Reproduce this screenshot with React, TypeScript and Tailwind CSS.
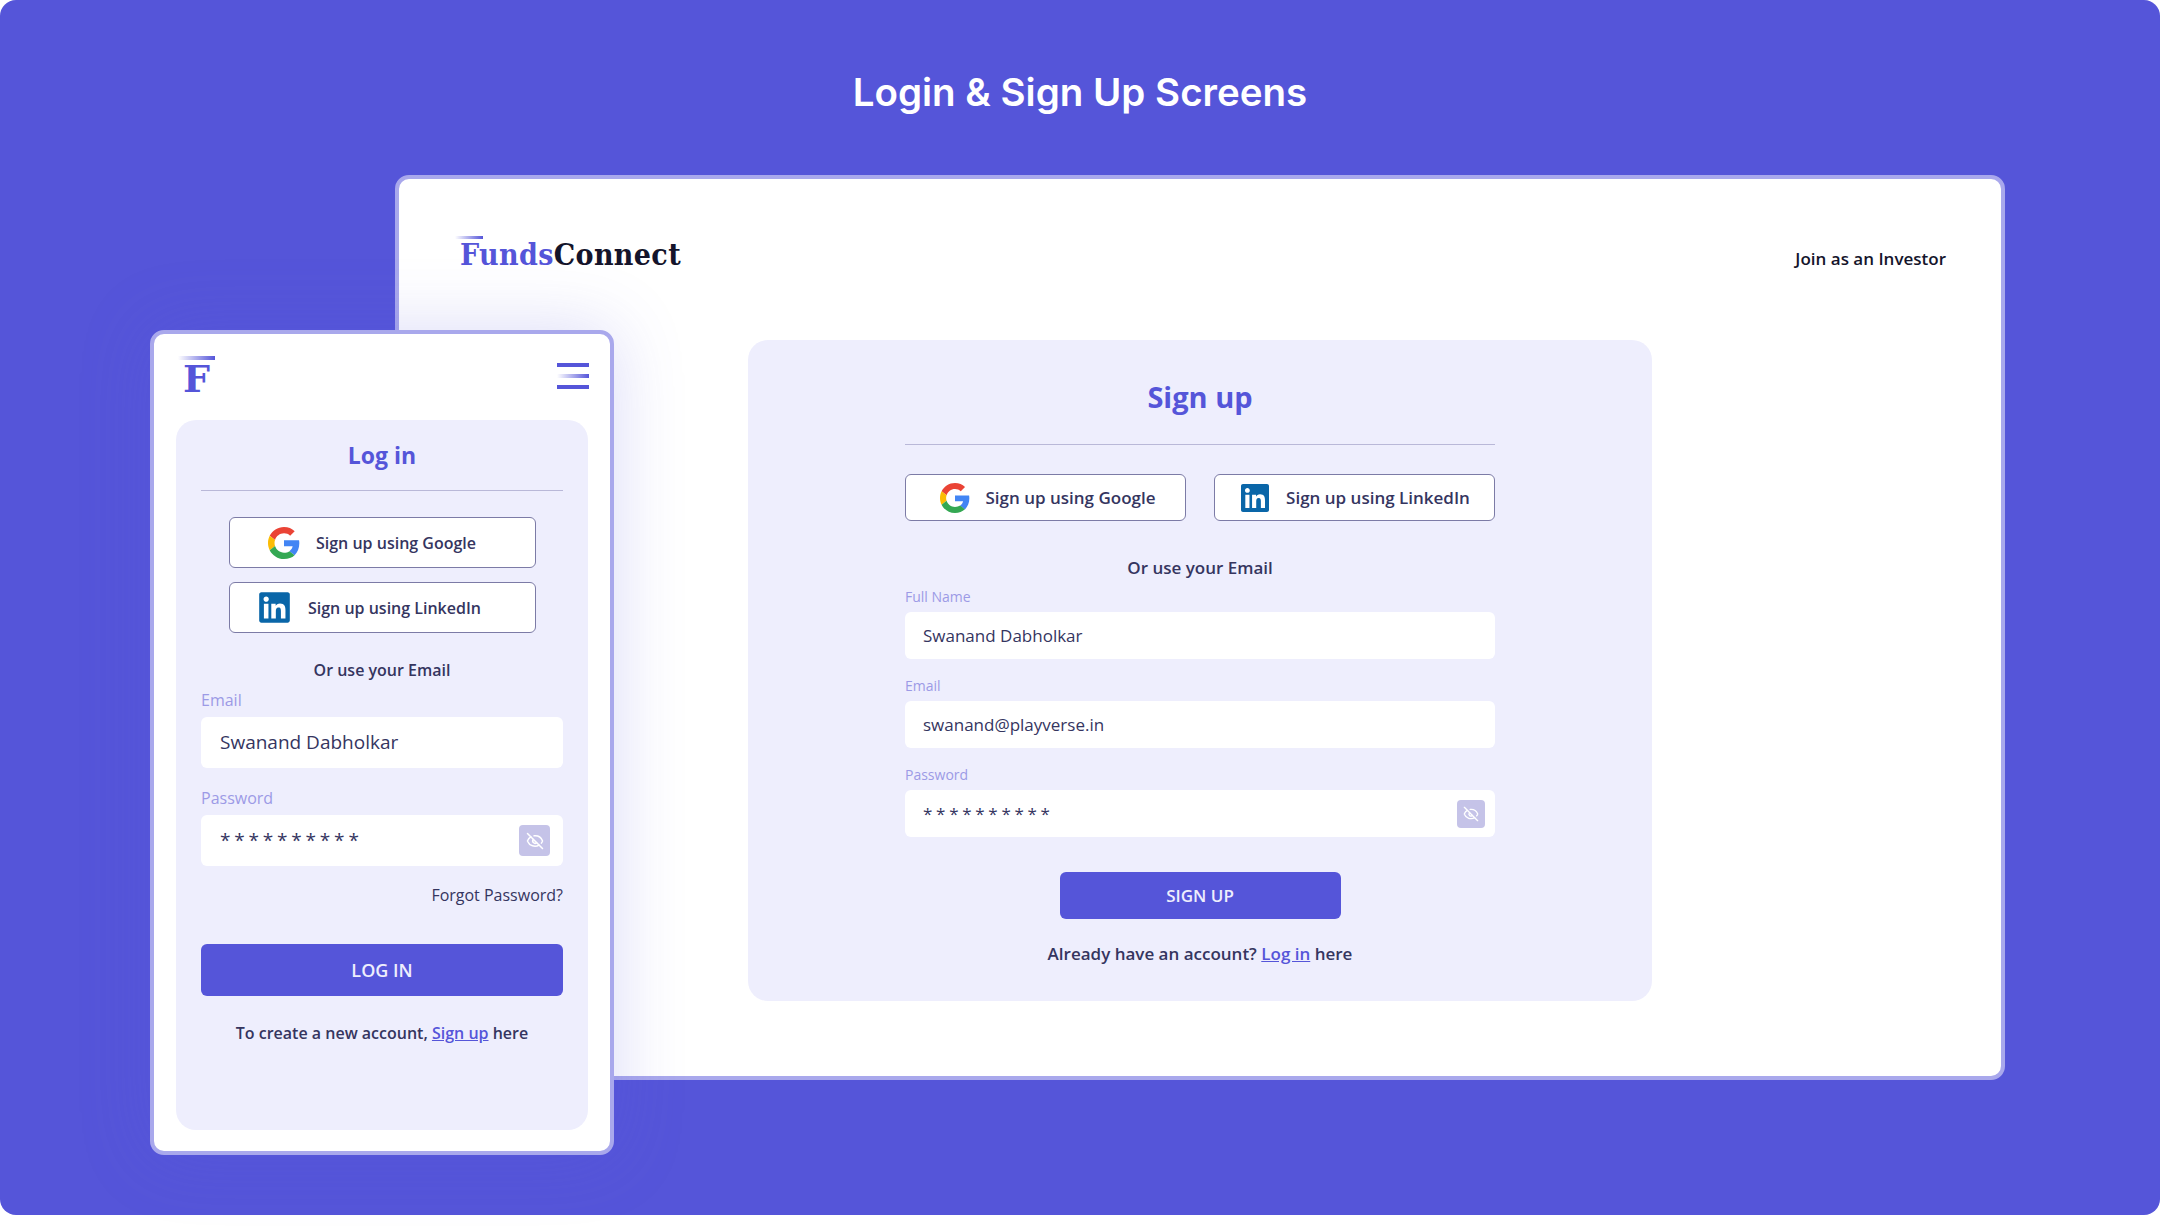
import { EyeOff } from 'lucide-react';
import { FaLinkedin } from 'react-icons/fa';

function GoogleIcon({ className }: { className: string }) {
  return (
    <svg viewBox="0 0 48 48" className={className}>
      <path fill="#EA4335" d="M24 9.5c3.54 0 6.71 1.22 9.21 3.6l6.85-6.85C35.9 2.38 30.47 0 24 0 14.62 0 6.51 5.38 2.56 13.22l7.98 6.19C12.43 13.72 17.74 9.5 24 9.5z" />
      <path fill="#4285F4" d="M46.98 24.55c0-1.57-.15-3.09-.38-4.55H24v9.02h12.94c-.58 2.96-2.26 5.48-4.78 7.18l7.73 6c4.51-4.18 7.09-10.36 7.09-17.65z" />
      <path fill="#FBBC05" d="M10.53 28.59c-.48-1.45-.76-2.99-.76-4.59s.27-3.14.76-4.59l-7.98-6.19C.92 16.46 0 20.12 0 24c0 3.88.92 7.54 2.56 10.78l7.97-6.19z" />
      <path fill="#34A853" d="M24 48c6.48 0 11.93-2.13 15.89-5.81l-7.73-6c-2.15 1.45-4.92 2.3-8.16 2.3-6.26 0-11.57-4.22-13.47-9.91l-7.98 6.19C6.51 42.62 14.62 48 24 48z" />
    </svg>
  );
}

function DesktopField({ label, value, secret }: { label: string; value: string; secret?: boolean }) {
  return (
    <div className="mt-[18px] first:mt-[8px]">
      <div className="text-[14px] leading-[18px] text-[#9c9ae6]">{label}</div>
      <div className="mt-[6px] flex h-[47px] items-center justify-between rounded-md bg-white pl-[18px] pr-[10px] text-[17px] font-medium text-[#35355f]">
        <span className={secret ? 'tracking-[3.7px]' : ''}>{value}</span>
        {secret && (
          <span className="flex h-[28px] w-[28px] items-center justify-center rounded bg-[#c5c3e8]">
            <EyeOff className="h-4 w-4 text-white" />
          </span>
        )}
      </div>
    </div>
  );
}

function MobileField({ label, value, secret }: { label: string; value: string; secret?: boolean }) {
  return (
    <div className="mt-[20px] first:mt-[8px]">
      <div className="text-[16px] leading-[20px] text-[#9c9ae6]">{label}</div>
      <div className="mt-[7px] flex h-[51px] items-center justify-between rounded-md bg-white pl-[19px] pr-[13px] text-[19px] font-medium text-[#35355f]">
        <span className={secret ? 'tracking-[3.8px]' : ''}>{value}</span>
        {secret && (
          <span className="flex h-[31px] w-[31px] items-center justify-center rounded bg-[#c5c3e8]">
            <EyeOff className="h-[18px] w-[18px] text-white" />
          </span>
        )}
      </div>
    </div>
  );
}

function DesktopWindow() {
  return (
    <div className="absolute left-[395px] top-[175px] h-[905px] w-[1610px] rounded-[14px] border-4 border-[#a9a8ec] bg-white">
      {/* Header */}
      <div className="flex h-[161px] items-start justify-between pl-[61px] pr-[55px] pt-[58px]">
        <div className="relative text-[30px] font-bold leading-[36px] tracking-[0.35px] [font-family:'DejaVu_Serif_Condensed','DejaVu_Serif',serif]">
          <span className="absolute left-[-5px] top-[-1px] h-[3px] w-[28px] bg-gradient-to-r from-transparent to-[#5555d9]" />
          <span className="text-[#5555d9]">Funds</span>
          <span className="text-[#14142b]">Connect</span>
        </div>
        <div className="pt-[9px] text-[17px] font-semibold text-[#14142b]">Join as an Investor</div>
      </div>

      {/* Sign up card */}
      <div className="mx-auto h-[661px] w-[904px] rounded-[20px] bg-[#eeeefd] pt-[37px]">
        <div className="mx-auto w-[590px]">
          <h2 className="text-center text-[29px] font-bold leading-[40px] text-[#5555d9]">Sign up</h2>
          <div className="mt-[27px] h-px bg-[#b9b8d8]" />
          <div className="mt-[29px] flex justify-between">
            <button className="flex h-[47px] w-[281px] items-center justify-center gap-[15px] rounded-md border border-[#7c7ba6] bg-white pl-[5px] text-[17px] font-semibold text-[#35355f]">
              <GoogleIcon className="h-[30px] w-[30px]" />
              Sign up using Google
            </button>
            <button className="flex h-[47px] w-[281px] items-center justify-center gap-[15px] rounded-md border border-[#7c7ba6] bg-white text-[17px] font-semibold text-[#35355f]">
              <FaLinkedin className="h-[32px] w-[32px] text-[#0a66a8]" />
              Sign up using LinkedIn
            </button>
          </div>
          <div className="mt-[35px] text-center text-[17px] font-semibold leading-[24px] text-[#35355f]">Or use your Email</div>
          <div>
            <DesktopField label="Full Name" value="Swanand Dabholkar" />
            <DesktopField label="Email" value="swanand@playverse.in" />
            <DesktopField label="Password" value="**********" secret />
          </div>
          <button className="mx-auto mt-[35px] block h-[47px] w-[281px] rounded-md bg-[#5555d9] text-[17px] font-semibold text-[#eeeefd]">SIGN UP</button>
          <div className="mt-[23px] text-center text-[17px] font-semibold leading-[24px] text-[#35355f]">
            Already have an account? <span className="text-[#5555d9] underline">Log in</span> here
          </div>
        </div>
      </div>
    </div>
  );
}

function MobileWindow() {
  return (
    <div className="absolute left-[150px] top-[330px] h-[825px] w-[464px] rounded-[14px] border-4 border-[#a9a8ec] bg-white shadow-[0_0_70px_rgba(85,85,217,0.22)]">
      {/* Header */}
      <div className="flex h-[86px] items-start justify-between pl-[24px] pr-[21px] pt-[22px]">
        <div className="relative h-[40px] w-[40px] text-[38px] font-bold leading-[42px] text-[#5555d9] [font-family:'DejaVu_Serif',serif]">
          <span className="absolute left-0 top-0 h-[4px] w-[37px] bg-gradient-to-r from-transparent to-[#5555d9]" />
          <span className="absolute left-[5px] top-[2px]">F</span>
        </div>
        <div className="flex w-[32px] flex-col gap-[7px] pt-[7px]">
          <span className="h-[4px] bg-[#5555d9]" />
          <span className="h-[4px] bg-gradient-to-r from-transparent to-[#5555d9]" />
          <span className="h-[4px] bg-[#5555d9]" />
        </div>
      </div>

      {/* Log in card */}
      <div className="mx-auto h-[710px] w-[412px] rounded-[20px] bg-[#eeeefd] px-[25px] pt-[18px]">
        <h2 className="text-center text-[23px] font-bold leading-[34px] text-[#5555d9]">Log in</h2>
        <div className="mt-[18px] h-px bg-[#b9b8d8]" />
        <div className="mt-[26px] flex flex-col items-center gap-[14px]">
          <button className="flex h-[51px] w-[307px] items-center justify-center gap-[16px] rounded-md border border-[#7c7ba6] bg-white pr-[20px] text-[16px] font-semibold text-[#35355f]">
            <GoogleIcon className="h-[32px] w-[32px]" />
            Sign up using Google
          </button>
          <button className="flex h-[51px] w-[307px] items-center justify-center gap-[16px] rounded-md border border-[#7c7ba6] bg-white pr-[26px] text-[16px] font-semibold text-[#35355f]">
            <FaLinkedin className="h-[35px] w-[35px] text-[#0a66a8]" />
            Sign up using LinkedIn
          </button>
        </div>
        <div className="mt-[25px] text-center text-[16px] font-semibold leading-[24px] text-[#35355f]">Or use your Email</div>
        <div>
          <MobileField label="Email" value="Swanand Dabholkar" />
          <MobileField label="Password" value="**********" secret />
        </div>
        <div className="mt-[18px] text-right text-[16px] font-medium leading-[22px] text-[#35355f]">Forgot Password?</div>
        <button className="mt-[38px] block h-[52px] w-full rounded-md bg-[#5555d9] text-[18px] font-semibold text-[#eeeefd]">LOG IN</button>
        <div className="mt-[25px] text-center text-[16px] font-semibold leading-[24px] text-[#35355f]">
          To create a new account, <span className="text-[#5555d9] underline">Sign up</span> here
        </div>
      </div>
    </div>
  );
}

export default function App() {
  return (
    <div className="h-[1230px] w-[2160px] overflow-hidden bg-white [font-family:'Open_Sans',sans-serif]">
      <div className="relative h-[1215px] rounded-[16px] bg-[#5555d9]">
        <h1 className="pt-[65px] text-center text-[38.5px] font-semibold leading-[54px] text-white [font-family:'Inter',sans-serif]">
          Login &amp; Sign Up Screens
        </h1>
        <DesktopWindow />
        <MobileWindow />
      </div>
    </div>
  );
}
